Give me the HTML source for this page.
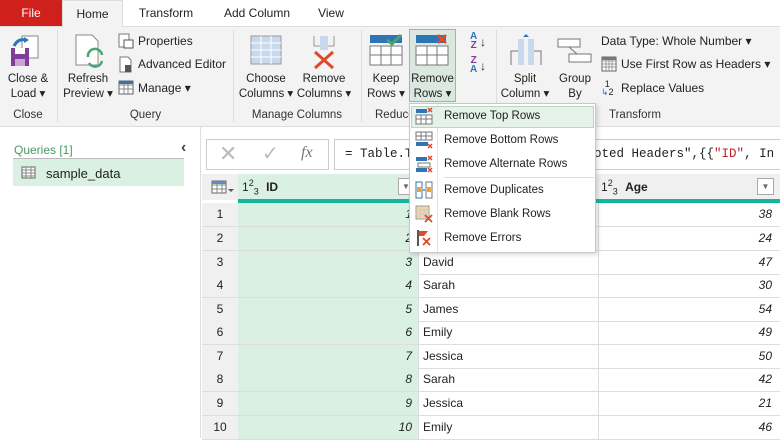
<!DOCTYPE html>
<html><head><style>
*{box-sizing:border-box;margin:0;padding:0}
body{width:780px;height:438px;overflow:hidden;background:#fff;font-family:"Liberation Sans",sans-serif;font-size:12px;color:#222;position:relative}
div{white-space:nowrap}
.a{position:absolute}
.tab{position:absolute;top:0;height:26px;line-height:26px;font-size:12px;text-align:center}
.rb{position:absolute;top:26px;left:0;width:780px;height:101px;background:#f3f3f3;border-top:1px solid #ddd;border-bottom:1px solid #ddd}
.lbl{position:absolute;text-align:center;font-size:11.5px;line-height:15px;color:#222}
.grp{position:absolute;top:109px;font-size:11.5px;color:#333;text-align:center}
.sep{position:absolute;top:30px;width:1px;height:92px;background:#ddd}
.row{position:absolute;left:202px;width:578px;height:24px;border-bottom:1px solid #ddd}
.rn{position:absolute;left:0;width:36px;height:23px;background:#f0f0f0;text-align:center;line-height:23px;font-size:12px}
.id{position:absolute;left:36px;width:180px;height:23px;background:#d9f0e2;text-align:right;padding-right:6px;line-height:23px;font-style:italic;font-size:12px}
.nm{position:absolute;left:216px;width:180px;height:23px;border-left:1px solid #ddd;line-height:23px;padding-left:4px;font-size:12px}
.ag{position:absolute;left:396px;width:180px;height:23px;border-left:1px solid #ddd;text-align:right;padding-right:6px;line-height:23px;font-style:italic;font-size:12px}
.mi{position:absolute;left:34px;font-size:11.5px;color:#222}
</style></head><body>
<div class="tab" style="left:0;width:62px;background:#d0201b;color:#fff">File</div>
<div class="tab" style="left:62px;width:61px;background:#f3f3f3;border:1px solid #ddd;border-bottom:none;height:27px;z-index:2">Home</div>
<div class="tab" style="left:128px;width:76px">Transform</div>
<div class="tab" style="left:214px;width:86px">Add Column</div>
<div class="tab" style="left:308px;width:46px">View</div>
<div class="rb"></div>
<svg class="a" style="left:10px;top:34px" width="32" height="34"><rect x="12" y="2" width="16" height="22" fill="#fff" stroke="#888"/><path d="M4 12 Q8 4 16 6" stroke="#2e75b6" stroke-width="3" fill="none"/><path d="M14 3 L19 6 L14 9Z" fill="#2e75b6"/><rect x="1" y="14" width="18" height="18" fill="#7f3f98"/><rect x="5" y="14" width="10" height="6" fill="#fff"/><rect x="5" y="25" width="10" height="7" fill="#c9a4d6"/></svg>
<div class="lbl" style="left:2px;top:72px;width:52px">Close &amp;<br>Load ▾</div>
<div class="grp" style="left:0;width:56px">Close</div>
<div class="sep" style="left:57px"></div>
<svg class="a" style="left:74px;top:33px" width="34" height="36"><path d="M2 2 H18 L24 8 V32 H2Z" fill="#fff" stroke="#888"/><path d="M14 24 A7 7 0 0 1 28 22 M28 28 A7 7 0 0 1 15 30" stroke="#4aa574" stroke-width="2.5" fill="none"/></svg>
<div class="lbl" style="left:60px;top:72px;width:56px">Refresh<br>Preview ▾</div>
<svg class="a" style="left:118px;top:33px" width="16" height="16"><rect x="1" y="1" width="10" height="13" fill="#fff" stroke="#777"/><rect x="6" y="7" width="9" height="8" fill="#fff" stroke="#555"/></svg>
<div class="lbl" style="left:138px;top:34px;font-size:12px">Properties</div>
<svg class="a" style="left:118px;top:56px" width="16" height="17"><path d="M2 1 H10 L13 4 V16 H2Z" fill="#fff" stroke="#777"/><rect x="7" y="9" width="6" height="7" fill="#555"/></svg>
<div class="lbl" style="left:138px;top:57px;font-size:12px">Advanced Editor</div>
<svg class="a" style="left:118px;top:80px" width="16" height="15"><rect x="1" y="1" width="14" height="13" fill="#fff" stroke="#666"/><path d="M1 5H15M1 9H15M6 1V14M10 1V14" stroke="#888"/><rect x="1" y="1" width="14" height="3" fill="#2e75b6"/></svg>
<div class="lbl" style="left:138px;top:81px;font-size:12px">Manage ▾</div>
<div class="grp" style="left:58px;width:175px">Query</div>
<div class="sep" style="left:233px"></div>
<svg class="a" style="left:250px;top:35px" width="32" height="30"><rect x="1" y="1" width="30" height="28" fill="#c8d9ee" stroke="#999"/><path d="M1 8H31M1 15H31M1 22H31M11 1V29M21 1V29" stroke="#fff"/></svg>
<div class="lbl" style="left:236px;top:72px;width:60px">Choose<br>Columns ▾</div>
<svg class="a" style="left:310px;top:34px" width="28" height="36"><path d="M4 2V12H24V2" stroke="#999" fill="none"/><rect x="10" y="2" width="8" height="14" fill="#c8d9ee"/><path d="M5 18L23 34M23 18L5 34" stroke="#e04a2a" stroke-width="3"/></svg>
<div class="lbl" style="left:294px;top:72px;width:60px">Remove<br>Columns ▾</div>
<div class="grp" style="left:234px;width:126px">Manage Columns</div>
<div class="sep" style="left:361px"></div>
<svg class="a" style="left:369px;top:34px" width="34" height="32"><rect x="1" y="1" width="32" height="8" fill="#2e75b6"/><path d="M18 6L23 10L32 1" stroke="#4aa574" stroke-width="3" fill="none"/><rect x="1" y="12" width="32" height="19" fill="#fff" stroke="#777"/><path d="M1 21H33M12 12V31M22 12V31" stroke="#777"/></svg>
<div class="lbl" style="left:362px;top:72px;width:48px">Keep<br>Rows ▾</div>
<div class="a" style="left:409px;top:29px;width:47px;height:73px;background:#dae8e0;border:1px solid #9ab8a8"></div>
<svg class="a" style="left:415px;top:34px" width="34" height="32"><rect x="1" y="1" width="30" height="8" fill="#2e75b6"/><path d="M23 1L31 9M31 1L23 9" stroke="#e04a2a" stroke-width="2.5"/><rect x="1" y="12" width="32" height="19" fill="#fff" stroke="#777"/><path d="M1 21H33M12 12V31M22 12V31" stroke="#777"/></svg>
<div class="lbl" style="left:407px;top:72px;width:51px">Remove<br>Rows ▾</div>
<div class="grp" style="left:375px;width:36px;overflow:hidden;text-align:left">Reduce</div>
<div class="lbl" style="left:470px;top:32px;color:#2e75b6;font-size:10px;line-height:9px;font-weight:bold">A<br><span style="color:#7f3f98">Z</span></div>
<div class="lbl" style="left:480px;top:35px;font-size:12px">↓</div>
<div class="lbl" style="left:470px;top:56px;color:#7f3f98;font-size:10px;line-height:9px;font-weight:bold">Z<br><span style="color:#2e75b6">A</span></div>
<div class="lbl" style="left:480px;top:59px;font-size:12px">↓</div>
<div class="sep" style="left:496px"></div>
<svg class="a" style="left:508px;top:33px" width="36" height="34"><path d="M18 1L15 4H21Z" fill="#2e75b6"/><rect x="10" y="6" width="6" height="26" fill="#c8d9ee"/><rect x="20" y="6" width="6" height="26" fill="#c8d9ee"/><path d="M3 32V18H10M26 18H33V32" stroke="#777" fill="none"/></svg>
<div class="lbl" style="left:500px;top:72px;width:50px">Split<br>Column ▾</div>
<svg class="a" style="left:557px;top:36px" width="36" height="28"><rect x="1" y="3" width="22" height="8" fill="#fff" stroke="#777"/><rect x="12" y="18" width="22" height="8" fill="#fff" stroke="#777"/><path d="M12 11L20 18" stroke="#777"/></svg>
<div class="lbl" style="left:554px;top:72px;width:42px">Group<br>By</div>
<div class="lbl" style="left:601px;top:34px;font-size:12px">Data Type: Whole Number ▾</div>
<svg class="a" style="left:601px;top:56px" width="16" height="16"><rect x="1" y="1" width="14" height="14" fill="#fff" stroke="#666"/><path d="M1 5H15M1 8H15M1 11H15M5 1V15M8 1V15M11 1V15" stroke="#999"/><rect x="1" y="1" width="14" height="3" fill="#777"/></svg>
<div class="lbl" style="left:621px;top:57px;font-size:12px">Use First Row as Headers ▾</div>
<div class="lbl" style="left:601px;top:80px;font-size:9px;line-height:8px">1<br><span style="color:#2e75b6">↳</span>2</div>
<div class="lbl" style="left:621px;top:81px;font-size:12px">Replace Values</div>
<div class="grp" style="left:600px;width:70px">Transform</div>
<div class="a" style="left:200px;top:127px;width:1px;height:311px;background:#ddd"></div>
<div class="a" style="left:14px;top:143px;font-size:12px;color:#4a9a62">Queries [1]</div>
<div class="a" style="left:181px;top:139px;font-size:16px;font-weight:bold;color:#444">‹</div>
<div class="a" style="left:13px;top:158px;width:171px;height:28px;background:#d9f0e2;border-top:1px solid #bbb"></div>
<svg class="a" style="left:21px;top:166px" width="15" height="13"><rect x="1" y="1" width="13" height="11" fill="#fff" stroke="#666"/><path d="M1 4H14M1 7H14M1 10H14M5 1V12M10 1V12" stroke="#888"/></svg>
<div class="a" style="left:46px;top:166px;font-size:13px">sample_data</div>
<div class="a" style="left:206px;top:139px;width:123px;height:31px;border:1px solid #ccc;background:#fff"></div>
<div class="a" style="left:219px;top:141px;font-size:22px;color:#bbb">✕</div>
<div class="a" style="left:262px;top:141px;font-size:20px;color:#bbb">✓</div>
<div class="a" style="left:301px;top:144px;font-size:16px;font-style:italic;font-family:'Liberation Serif',serif;color:#777">fx</div>
<div class="a" style="left:334px;top:139px;width:446px;height:31px;border:1px solid #ccc;border-right:none;background:#fff;font-family:'Liberation Mono',monospace;font-size:12.5px;line-height:29px;padding-left:10px;white-space:nowrap;overflow:hidden">= Table.T<span style="display:inline-block;width:174px"></span>moted Headers",{{<span style="color:#c0202a">"ID"</span>, In</div>
<div class="a" style="left:202px;top:174px;width:578px;height:26px;background:#f0f0f0"></div>
<div class="a" style="left:238px;top:174px;width:180px;height:26px;background:#d9f0e2"></div>
<svg class="a" style="left:211px;top:180px" width="24" height="14"><rect x="1" y="1" width="14" height="12" fill="#fff" stroke="#666"/><path d="M1 5H15M1 9H15M6 1V13M11 1V13" stroke="#888"/><rect x="1" y="1" width="14" height="3" fill="#5b8ac6"/><path d="M17 9H23L20 12Z" fill="#555"/></svg>
<div class="a" style="left:242px;top:178px;font-size:12px">1<sup style="font-size:9px">2</sup><sub style="font-size:9px">3</sub> <b style="margin-left:4px">ID</b></div>
<div class="a" style="left:398px;top:178px;width:16px;height:17px;border:1px solid #aaa;background:#fff;font-size:8px;text-align:center;line-height:15px;color:#666">▼</div>
<div class="a" style="left:601px;top:178px;font-size:12px">1<sup style="font-size:9px">2</sup><sub style="font-size:9px">3</sub> <b style="margin-left:4px">Age</b></div>
<div class="a" style="left:757px;top:178px;width:17px;height:17px;border:1px solid #aaa;background:#fff;font-size:8px;text-align:center;line-height:15px;color:#666">▼</div>
<div class="a" style="left:238px;top:199px;width:542px;height:4px;background:#14b59c"></div>
<div class="row" style="top:203px"><div class="rn">1</div><div class="id">1</div><div class="nm"></div><div class="ag">38</div></div>
<div class="row" style="top:227px"><div class="rn">2</div><div class="id">2</div><div class="nm"></div><div class="ag">24</div></div>
<div class="row" style="top:251px"><div class="rn">3</div><div class="id">3</div><div class="nm">David</div><div class="ag">47</div></div>
<div class="row" style="top:274px"><div class="rn">4</div><div class="id">4</div><div class="nm">Sarah</div><div class="ag">30</div></div>
<div class="row" style="top:298px"><div class="rn">5</div><div class="id">5</div><div class="nm">James</div><div class="ag">54</div></div>
<div class="row" style="top:321px"><div class="rn">6</div><div class="id">6</div><div class="nm">Emily</div><div class="ag">49</div></div>
<div class="row" style="top:345px"><div class="rn">7</div><div class="id">7</div><div class="nm">Jessica</div><div class="ag">50</div></div>
<div class="row" style="top:368px"><div class="rn">8</div><div class="id">8</div><div class="nm">Sarah</div><div class="ag">42</div></div>
<div class="row" style="top:392px"><div class="rn">9</div><div class="id">9</div><div class="nm">Jessica</div><div class="ag">21</div></div>
<div class="row" style="top:416px"><div class="rn">10</div><div class="id">10</div><div class="nm">Emily</div><div class="ag">46</div></div>
<div class="a" style="left:409px;top:103px;width:187px;height:150px;background:#fff;border:1px solid #c8c8c8;box-shadow:2px 2px 4px rgba(0,0,0,.15)">
 <div class="a" style="left:27px;top:0;width:1px;height:148px;background:#e2e2e2"></div>
 <div class="a" style="left:1px;top:2px;width:183px;height:22px;background:#e4f2e9;border:1px solid #b8d6c4"></div>
 <div class="a" style="left:34px;top:73px;width:150px;height:1px;background:#ddd"></div>
 <svg class="a" style="left:5px;top:3px" width="18" height="18"><rect x="1" y="2" width="11" height="4" fill="#2e75b6"/><path d="M13 1L17 5M17 1L13 5" stroke="#e04a2a" stroke-width="1.5"/><rect x="1" y="8" width="16" height="9" fill="#fff" stroke="#777"/><path d="M1 12H17M6 8V17M11 8V17" stroke="#777"/></svg>
 <div class="mi" style="top:6px">Remove Top Rows</div>
 <svg class="a" style="left:5px;top:27px" width="18" height="18"><rect x="1" y="1" width="16" height="8" fill="#fff" stroke="#777"/><path d="M1 5H17M6 1V9M11 1V9" stroke="#777"/><rect x="1" y="11" width="12" height="4" fill="#2e75b6"/><path d="M13 13L17 17M17 13L13 17" stroke="#e04a2a" stroke-width="1.5"/></svg>
 <div class="mi" style="top:30px">Remove Bottom Rows</div>
 <svg class="a" style="left:5px;top:51px" width="18" height="18"><rect x="1" y="2" width="11" height="4" fill="#2e75b6"/><rect x="3" y="8" width="12" height="4" fill="#fff" stroke="#777"/><rect x="1" y="13" width="11" height="4" fill="#2e75b6"/><path d="M13 1L17 5M17 1L13 5M13 13L17 17M17 13L13 17" stroke="#e04a2a" stroke-width="1.5"/></svg>
 <div class="mi" style="top:54px">Remove Alternate Rows</div>
 <svg class="a" style="left:5px;top:77px" width="18" height="18"><rect x="1" y="1" width="6" height="16" fill="#fff" stroke="#2e75b6"/><rect x="2" y="6" width="4" height="5" fill="#e8a33c"/><rect x="11" y="1" width="6" height="16" fill="#fff" stroke="#777"/><rect x="12" y="6" width="4" height="5" fill="#e8a33c"/><path d="M8 9H10" stroke="#333"/></svg>
 <div class="mi" style="top:80px">Remove Duplicates</div>
 <svg class="a" style="left:5px;top:101px" width="18" height="18"><rect x="1" y="1" width="13" height="13" fill="#f3d5a8" stroke="#999"/><path d="M1 5H14M1 9H14M5 1V14M9 1V14" stroke="#ccc"/><path d="M10 10L17 17M17 10L10 17" stroke="#e04a2a" stroke-width="1.8"/></svg>
 <div class="mi" style="top:104px">Remove Blank Rows</div>
 <svg class="a" style="left:5px;top:125px" width="18" height="18"><path d="M3 1V17" stroke="#555" stroke-width="2"/><path d="M4 2H13L9 7L4 7Z" fill="#e04a2a"/><path d="M8 9L15 16M15 9L8 16" stroke="#e04a2a" stroke-width="1.8"/></svg>
 <div class="mi" style="top:128px">Remove Errors</div>
</div>
</body></html>
